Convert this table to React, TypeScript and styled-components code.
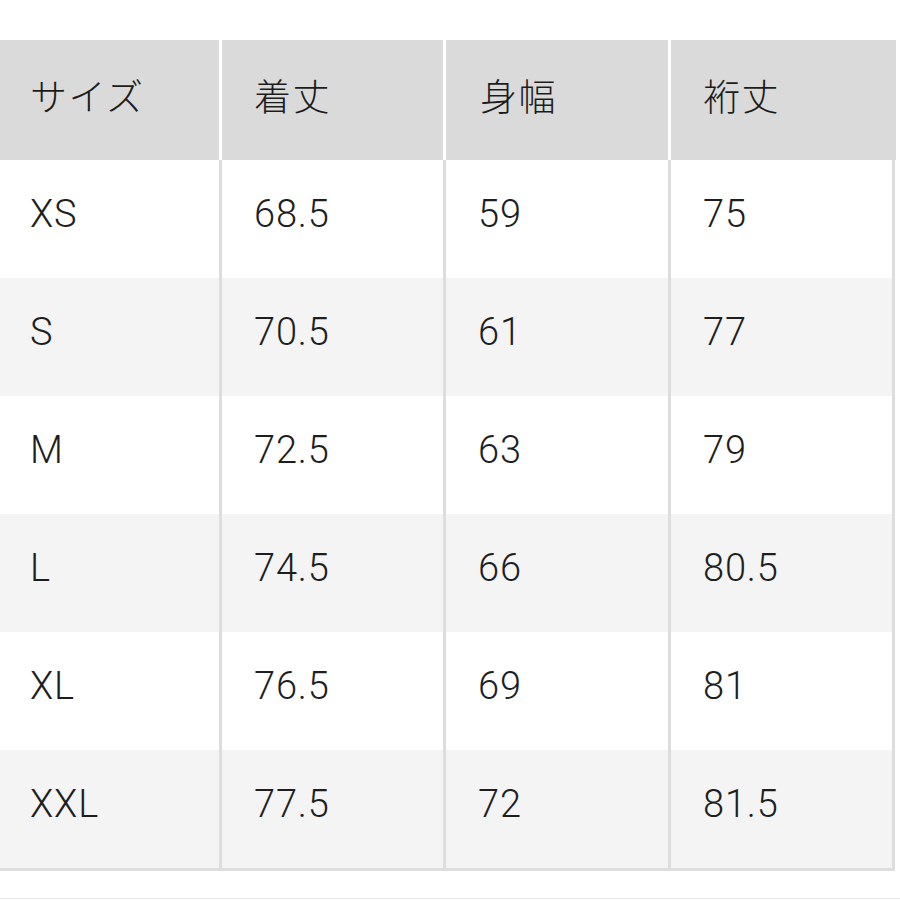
import styled, { createGlobalStyle } from 'styled-components'

const GlobalStyle = createGlobalStyle`
    html, body {
        margin: 0;
        padding: 0;
        background: #ffffff;
    }
    body {
        font-family: Roboto, "Noto Sans CJK JP", sans-serif;
        color: #1e1e1e;
    }
`

const Page = styled.div`
    width: 900px;
    padding-top: 40px;
`

const SizeTable = styled.div`
    width: 896px;
`

const HeaderRow = styled.div`
    display: grid;
    grid-template-columns: 219px 221px 222px 225px;
    column-gap: 3px;
    height: 120px;
`

const HeaderCell = styled.div<{ $pad: number }>`
    background: #dadada;
    display: flex;
    align-items: center;
    padding: 0 0 10px ${(p) => p.$pad}px;
    font-family: "Noto Sans CJK JP", sans-serif;
    font-weight: 300;
    font-size: 37px;
    letter-spacing: 1.5px;
    color: #1c1c1c;
`

const Body = styled.div`
    width: 892px;
    border-right: 3px solid #dddddd;
    border-bottom: 3px solid #dddddd;
`

const Row = styled.div<{ $shaded: boolean }>`
    display: grid;
    grid-template-columns: 219px 224px 225px 224px;
    height: 118px;
    background: ${(p) => (p.$shaded ? '#f4f4f4' : '#ffffff')};
`

const Cell = styled.div<{ $pad: number; $first?: boolean }>`
    display: flex;
    align-items: center;
    padding: 0 0 10px ${(p) => p.$pad}px;
    border-left: ${(p) => (p.$first ? 'none' : '3px solid #dddddd')};
    font-family: Roboto, sans-serif;
    font-weight: 300;
    font-size: 38px;
    letter-spacing: 0.8px;
    color: #1e1e1e;
`

const Divider = styled.div`
    margin-top: 27px;
    height: 1px;
    background: #e6e6e6;
`

const headers = ['サイズ', '着丈', '身幅', '裄丈']
const headerPads = [30, 32, 34, 32]
const cellPads = [30, 32, 32, 32]

const rows = [
    ['XS', '68.5', '59', '75'],
    ['S', '70.5', '61', '77'],
    ['M', '72.5', '63', '79'],
    ['L', '74.5', '66', '80.5'],
    ['XL', '76.5', '69', '81'],
    ['XXL', '77.5', '72', '81.5'],
]

function App() {
    return (
        <Page>
            <GlobalStyle />
            <SizeTable>
                <HeaderRow>
                    {headers.map((h, i) => (
                        <HeaderCell key={h} $pad={headerPads[i]}>{h}</HeaderCell>
                    ))}
                </HeaderRow>
                <Body>
                    {rows.map((r, ri) => (
                        <Row key={r[0]} $shaded={ri % 2 === 1}>
                            {r.map((v, ci) => (
                                <Cell key={ci} $pad={cellPads[ci]} $first={ci === 0}>{v}</Cell>
                            ))}
                        </Row>
                    ))}
                </Body>
            </SizeTable>
            <Divider />
        </Page>
    )
}

export default App
